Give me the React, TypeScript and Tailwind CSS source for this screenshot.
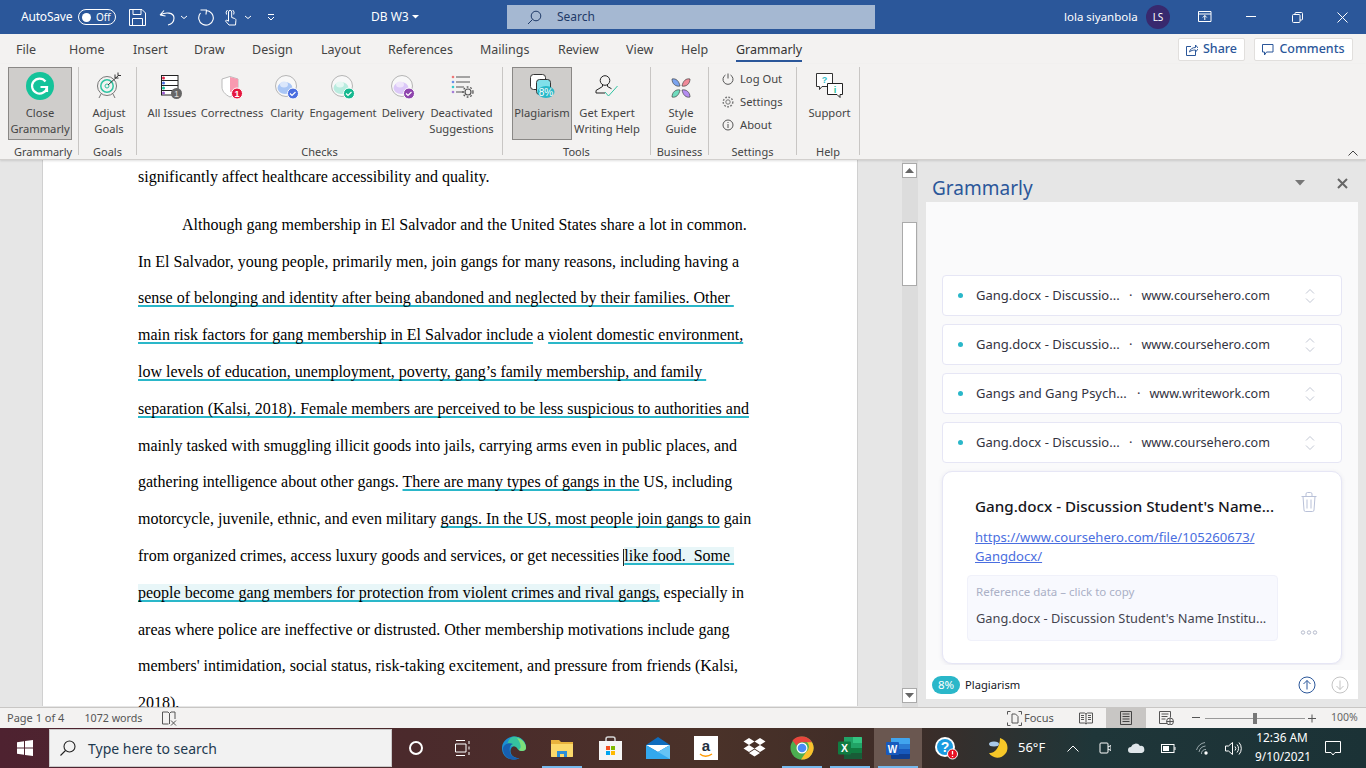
import React from "react";

const W = "#ffffff";

function Svg({ w, h, children, className = "" }: { w: number; h: number; children: React.ReactNode; className?: string }) {
  return (
    <svg width={w} height={h} viewBox={`0 0 ${w} ${h}`} fill="none" className={`block shrink-0 ${className}`}>
      {children}
    </svg>
  );
}

/* ---------- title bar ---------- */
function TitleBar() {
  return (
    <div className="h-[34px] shrink-0 bg-[#2b579a] flex items-center text-white relative">
      <span className="ml-[21px] w-[50px] text-[12px] tracking-[-0.2px] whitespace-nowrap">AutoSave</span>
      <div className="ml-[7px] w-[38px] h-[16px] rounded-full border border-white flex items-center">
        <div className="ml-[3px] w-[9px] h-[9px] rounded-full bg-white" />
        <span className="ml-[5px] text-[10px] leading-none">Off</span>
      </div>
      <Svg w={17} h={17} className="ml-[13px]">
        <path d="M.5.5h12.5l3.5 3.5v12.5H.5z M4 .5v5h8v-5 M3.5 16.5v-7h10v7" stroke={W} />
      </Svg>
      <Svg w={17} h={17} className="ml-[13px]">
        <path d="M1 6l4 -4.5 M1 6l5.5 1 M1.5 6C6 3 15 3 15 9c0 3-2 6-6 7" stroke={W} strokeWidth="1.1" />
      </Svg>
      <Svg w={8} h={5} className="ml-[4px]"><path d="M1 1l3 2.5L7 1" stroke={W} /></Svg>
      <Svg w={17} h={17} className="ml-[9px]">
        <path d="M9 1.5A7.3 7.3 0 1 1 3.5 4 M9.5 .5L9 5.5 M3.5 1h5.5" stroke={W} strokeWidth="1.1" />
      </Svg>
      <Svg w={13} h={17} className="ml-[10px]">
        <path d="M4.5 8V3a1.6 1.6 0 0 1 3.2 0v5.5l3 1c1 .4 1.3 1 1.2 2l-.4 4.5H5L1.5 12l1-1 2 1.2V8 M2.5 5.5a3.7 3.7 0 0 1 1-4.5 M9.7 5.5a3.7 3.7 0 0 0-1-4.5" stroke={W} strokeWidth="1" />
      </Svg>
      <Svg w={8} h={5} className="ml-[7px]"><path d="M1 1l3 2.5L7 1" stroke={W} /></Svg>
      <Svg w={8} h={7} className="ml-[15px]"><path d="M1 .5h6 M1 3l3 3 3-3" stroke={W} /></Svg>
      <span className="ml-[96px] w-[34px] text-[12px] whitespace-nowrap">DB W3</span>
      <Svg w={8} h={4} className="ml-[7px]"><path d="M0 0h7L3.500 3.500z" fill={W} /></Svg>
      <div className="ml-[87px] w-[368px] h-[24px] bg-[#a5b8d2] flex items-center text-[#1f3a68]">
        <Svg w={15} h={15} className="ml-[20px]">
          <circle cx="9" cy="6" r="4.8" stroke="#1f3a68" />
          <path d="M5.500 9.500L1 14" stroke="#1f3a68" />
        </Svg>
        <span className="ml-[15px] text-[12px]">Search</span>
      </div>
      <span className="ml-[189px] w-[71px] text-[11.500px] whitespace-nowrap">lola siyanbola</span>
      <div className="ml-[11px] w-[24px] h-[24px] rounded-full bg-[#38296e] flex items-center justify-center text-[10px]">LS</div>
      <Svg w={14} h={12} className="ml-[28px]">
        <path d="M.5.5h12.500v10H.5z M.5 3h12.500" stroke={W} />
        <path d="M6.800 9V4.500 M4.800 6.500l2-2 2 2" stroke={W} />
      </Svg>
      <Svg w={11} h={2} className="ml-[34px]"><path d="M0 .5h10" stroke={W} /></Svg>
      <Svg w={11} h={11} className="ml-[35px]">
        <rect x=".5" y="2.500" width="7.500" height="8" rx="1" stroke={W} />
        <path d="M3 2.500V1.500a1 1 0 0 1 1-1h5.500a1 1 0 0 1 1 1V7a1 1 0 0 1-1 1H8" stroke={W} />
      </Svg>
      <Svg w={11} h={11} className="ml-[34px]"><path d="M.5.500l10 10 M10.500.500l-10 10" stroke={W} /></Svg>
    </div>
  );
}

/* ---------- tabs ---------- */
const TABS: [string, number][] = [
  ["File", 53], ["Home", 64], ["Insert", 61], ["Draw", 58], ["Design", 69], ["Layout", 67],
  ["References", 92], ["Mailings", 78], ["Review", 68], ["View", 55], ["Help", 55],
];

function TabRow() {
  return (
    <div className="h-[30px] shrink-0 flex items-center text-[12.5px] text-[#444] pl-[16px] pt-[2px]">
      {TABS.map(([t, w]) => (
        <span key={t} style={{ width: w }}>{t}</span>
      ))}
      <span className="h-[28px] flex items-center relative font-normal text-[#333]">
        Grammarly
        <span className="absolute left-0 right-0 bottom-[2px] h-[2px] bg-[#2b579a]" />
      </span>
      <div className="ml-auto flex items-center gap-[9px] mr-[13px] mt-[-1px]">
        <div className="h-[23px] w-[67px] bg-white border border-[#e1dfdd] rounded-[2px] flex items-center justify-center gap-[5px] text-[#2b579a] text-[12.5px] font-medium">
          <Svg w={12} h={13}>
            <path d="M5 3.500H.5v9h9V9 M3.500 9c.5-3 3-4.500 6-4.500V2l3 3.500-3 3.500V7C7 7 5 7.500 3.500 9z" stroke="#2b579a" />
          </Svg>
          Share
        </div>
        <div className="h-[23px] w-[99px] bg-white border border-[#e1dfdd] rounded-[2px] flex items-center justify-center gap-[5px] text-[#2b579a] text-[12.5px] font-medium">
          <Svg w={12} h={12}><path d="M.5.500h10.500v7.500H4.500L2.500 11V8h-2z" stroke="#2b579a" /></Svg>
          Comments
        </div>
      </div>
    </div>
  );
}

/* ---------- ribbon icons ---------- */
const Badge = ({ cx, cy, fill }: { cx: number; cy: number; fill: string }) => (
  <g>
    <circle cx={cx} cy={cy} r="5.500" fill={fill} stroke="#fff" />
    <path d={`M${cx - 3} ${cy}l2 2 3.500-3.500`} stroke="#fff" strokeWidth="1.200" />
  </g>
);

const IconGrammarly = () => (
  <Svg w={28} h={28}>
    <circle cx="14" cy="14" r="14" fill="#15c39a" />
    <path d="M19.500 9.500A7.500 7.500 0 1 0 21 15h-6.500 M21 15v5 M21 15l-3 0" stroke="#fff" strokeWidth="2.200" fill="none" />
  </Svg>
);
const IconGoals = () => (
  <Svg w={26} h={28}>
    <circle cx="11" cy="14" r="9.500" stroke="#777" />
    <circle cx="11" cy="14" r="6.200" stroke="#2fc4a2" strokeWidth="1.500" />
    <circle cx="11" cy="14" r="2" stroke="#2fc4a2" />
    <path d="M12 13L23 3 M19 2.500v3.500h3.500 M22 .5v3h3" stroke="#333" />
    <path d="M5 22l-2 4 M17 22l2 4" stroke="#777" />
  </Svg>
);
const IconAll = () => (
  <Svg w={22} h={25}>
    <rect x=".5" y=".5" width="16.500" height="19.500" fill="#fff" stroke="#222" />
    <path d="M1 5.500h16 M1 10.500h16 M1 15.500h16" stroke="#222" strokeWidth="1.200" />
    <circle cx="2.500" cy="3" r="1.500" fill="#e5284a" />
    <circle cx="2.500" cy="8" r="1.500" fill="#4a6ee0" />
    <circle cx="2.500" cy="13" r="1.500" fill="#15c39a" />
    <circle cx="2.500" cy="18" r="1.500" fill="#9b59d0" />
    <circle cx="15.500" cy="18.500" r="5.500" fill="#666" />
    <text x="15.500" y="22" textAnchor="middle" fontSize="9" fill="#ddd" fontFamily="Liberation Sans">1</text>
  </Svg>
);
const IconCorrect = () => (
  <Svg w={24} h={25}>
    <path d="M10 1.500L2 4v8c0 4 3 7.500 8 10 5-2.500 8-6 8-10V4z" fill="#fff" stroke="#bbb" />
    <path d="M10 2l8 2v8c0 2-.5 3-1 4l-7 1z" fill="#f89ab0" />
    <circle cx="17" cy="18.500" r="5.500" fill="#e5173f" stroke="#fff" />
    <text x="17" y="22" textAnchor="middle" fontSize="9" fontWeight="bold" fill="#fff" fontFamily="Liberation Sans">1</text>
  </Svg>
);
const Orb = ({ a, b, badge }: { a: string; b: string; badge: string }) => (
  <Svg w={24} h={25}>
    <circle cx="11" cy="11" r="10.500" fill="#f8f8f8" stroke="#b5b5b5" />
    <ellipse cx="10" cy="13" rx="7.500" ry="6" fill={a} />
    <ellipse cx="9" cy="9.500" rx="4" ry="3" fill={b} />
    <Badge cx={18} cy={18.500} fill={badge} />
  </Svg>
);
const IconDeact = () => (
  <Svg w={24} h={25}>
    <path d="M6 2h14 M6 7h14 M6 12h8 M6 17h8" stroke="#555" />
    <circle cx="3" cy="2" r="1.300" fill="#e77" />
    <circle cx="3" cy="7" r="1.300" fill="#6a8fe8" />
    <circle cx="3" cy="12" r="1.300" fill="#3cc" />
    <circle cx="3" cy="17" r="1.300" fill="#a57fd8" />
    <circle cx="18" cy="17" r="3" stroke="#555" strokeWidth="1.200" />
    <circle cx="18" cy="17" r="5" stroke="#555" strokeWidth="1.300" strokeDasharray="1.800 1.800" />
  </Svg>
);
const IconPlag = () => (
  <Svg w={25} h={25}>
    <rect x=".5" y=".5" width="15" height="15" rx="3" fill="#fff" stroke="#333" />
    <rect x="6.500" y="5.500" width="14" height="15" rx="3" fill="#7fe0ea" stroke="#333" />
    <ellipse cx="16" cy="18" rx="8.500" ry="6" fill="#28b8c8" />
    <text x="16" y="21.500" textAnchor="middle" fontSize="10" fill="#fff" fontFamily="Liberation Sans">8%</text>
  </Svg>
);
const IconExpert = () => (
  <Svg w={25} h={25}>
    <circle cx="10" cy="6.500" r="4.800" stroke="#222" />
    <path d="M7.500 11v1.500L1 16.500V19h9 M12.500 11v1.500l4 2.200" stroke="#222" />
    <path d="M10 18l3.500 4 9-10" stroke="#2dc3a1" />
  </Svg>
);
const IconStyle = () => (
  <Svg w={22} h={22}>
    <path d="M2 2c4-1 7 2 8 7C6 10 2 7 2 2z" fill="#7ba3ee" stroke="#444" strokeWidth=".700" />
    <path d="M20 2c-4-1-7 2-8 7 4 1 8-2 8-7z" fill="#f08a98" stroke="#444" strokeWidth=".700" />
    <path d="M2 20c4 1 7-2 8-7-4-1-8 2-8 7z" fill="#6fdcbe" stroke="#444" strokeWidth=".700" />
    <path d="M20 20c-4 1-7-2-8-7 4-1 8 2 8 7z" fill="#b48cf0" stroke="#444" strokeWidth=".700" />
  </Svg>
);
const IconSupport = () => (
  <Svg w={27} h={26}>
    <path d="M.5.500h16v13H6l-2.500 3v-3h-3z" fill="#fff" stroke="#333" />
    <text x="8.500" y="10" textAnchor="middle" fontSize="9" fontWeight="bold" fill="#2bbcc8" fontFamily="Liberation Sans">?</text>
    <path d="M11.500 10.500h15v11h-2.500v3l-3-3h-9.500z" fill="#fff" stroke="#222" />
    <text x="19" y="20" textAnchor="middle" fontSize="9" fontWeight="bold" fill="#15c39a" fontFamily="Liberation Sans">i</text>
  </Svg>
);

function RibbonBtn({ w, icon, label, active, pt = 3 }: { w: number; icon: React.ReactNode; label: string[]; active?: boolean; pt?: number }) {
  return (
    <div
      style={{ width: w }}
      className={`h-[73px] shrink-0 flex flex-col items-center text-[11.200px] leading-[16px] text-[#444] whitespace-nowrap ${active ? "bg-[#cfcdcb] border border-[#8a8886]" : "border border-transparent"}`}
    >
      <div className="h-[36px] flex items-center justify-center" style={{ paddingTop: pt }}>{icon}</div>
      <div className="mt-[1px]">{label[0]}</div>
      {label[1] && <div>{label[1]}</div>}
    </div>
  );
}

function Group({ w, label, children }: { w: number; label: string; children: React.ReactNode }) {
  return (
    <div style={{ width: w }} className="shrink-0 flex flex-col border-r border-[#c8c6c4] h-[88px]">
      <div className="h-[73px] shrink-0 flex">{children}</div>
      <div className="h-[15px] shrink-0 mt-[4px] flex items-center justify-center text-[11px] leading-none text-[#444] whitespace-nowrap">{label}</div>
    </div>
  );
}

function Ribbon() {
  return (
    <div className="h-[96px] shrink-0 flex pl-[8px] pt-[3px] border-b border-[#d2d0ce] shadow-[0_1px_2px_rgba(0,0,0,0.12)] relative z-10">
      <Group w={71} label="Grammarly"><RibbonBtn w={64} active pt={0} icon={<IconGrammarly />} label={["Close", "Grammarly"]} /></Group>
      <Group w={58} label="Goals"><div className="w-[58px] pl-[3px] flex justify-center"><RibbonBtn w={50} pt={0} icon={<IconGoals />} label={["Adjust", "Goals"]} /></div></Group>
      <Group w={366} label="Checks">
        <div className="flex pl-[8px]">
          <RibbonBtn w={54} icon={<IconAll />} label={["All Issues"]} />
          <RibbonBtn w={66} icon={<IconCorrect />} label={["Correctness"]} />
          <RibbonBtn w={44} icon={<Orb a="#a9c6f5" b="#dbe7fb" badge="#4a6ee0" />} label={["Clarity"]} />
          <RibbonBtn w={68} icon={<Orb a="#b9ecdf" b="#e5f8f3" badge="#15b88f" />} label={["Engagement"]} />
          <RibbonBtn w={52} icon={<Orb a="#dcc8f8" b="#efe5fb" badge="#8e44ad" />} label={["Delivery"]} />
          <RibbonBtn w={65} icon={<IconDeact />} label={["Deactivated", "Suggestions"]} />
        </div>
      </Group>
      <Group w={148} label="Tools">
        <div className="flex pl-[9px]">
          <RibbonBtn w={60} active pt={1} icon={<IconPlag />} label={["Plagiarism"]} />
          <RibbonBtn w={70} pt={1} icon={<IconExpert />} label={["Get Expert", "Writing Help"]} />
        </div>
      </Group>
      <Group w={58} label="Business"><div className="w-[58px] pl-[3px] flex justify-center"><RibbonBtn w={50} icon={<IconStyle />} label={["Style", "Guide"]} /></div></Group>
      <Group w={88} label="Settings">
        <div className="pl-[13px] pt-[2.500px] flex flex-col gap-[5px] text-[11.200px] leading-[18px] text-[#444]">
          <div className="flex items-center gap-[6px]">
            <Svg w={12} h={12}><path d="M3.500 2a5 5 0 1 0 5 0 M6 .5v5" stroke="#555" /></Svg>Log Out
          </div>
          <div className="flex items-center gap-[6px]">
            <Svg w={12} h={12}><circle cx="6" cy="6" r="2.200" stroke="#777" /><circle cx="6" cy="6" r="4.800" stroke="#777" strokeWidth="1.400" strokeDasharray="1.800 1.400" /></Svg>Settings
          </div>
          <div className="flex items-center gap-[6px]">
            <Svg w={12} h={12}><circle cx="6" cy="6" r="5" stroke="#555" /><path d="M6 5v4 M6 3v1" stroke="#555" /></Svg>About
          </div>
        </div>
      </Group>
      <Group w={63} label="Help"><div className="w-[63px] pl-[3px] flex justify-center"><RibbonBtn w={56} pt={0} icon={<IconSupport />} label={["Support"]} /></div></Group>
      <div className="ml-auto self-end mb-[3px] mr-[8px]">
        <Svg w={10} h={6}><path d="M.5 5.500L5 1l4.500 4.500" stroke="#444" /></Svg>
      </div>
    </div>
  );
}

/* ---------- document ---------- */
const U = ({ children }: { children: React.ReactNode }) => (
  <span className="underline decoration-2 decoration-[#2ab7c9] underline-offset-[2px] [text-decoration-skip-ink:none]">{children}</span>
);
const H = ({ children }: { children: React.ReactNode }) => (
  <span className="bg-[#e8f6f8] underline decoration-2 decoration-[#2ab7c9] underline-offset-[2px] [text-decoration-skip-ink:none]">{children}</span>
);

function Line({ children, indent, className = "" }: { children: React.ReactNode; indent?: boolean; className?: string }) {
  return <div className={`h-[36.8px] leading-[36.8px] whitespace-pre ${indent ? "pl-[44px]" : ""} ${className}`}>{children}</div>;
}

function Doc() {
  return (
    <div className="w-[902px] shrink-0 bg-[#e6e6e6] overflow-hidden">
      <div className="ml-[42px] w-[816px] h-full bg-white border-x border-[#d0d0d0] pl-[95px] font-['Liberation_Serif',serif] text-[16px] text-black">
        <Line className="mt-[-1px] mb-[11px]">significantly affect healthcare accessibility and quality.</Line>
        <Line indent>Although gang membership in El Salvador and the United States share a lot in common.</Line>
        <Line>In El Salvador, young people, primarily men, join gangs for many reasons, including having a</Line>
        <Line><U>sense of belonging and identity after being abandoned and neglected by their families. Other </U></Line>
        <Line><U>main risk factors for gang membership in El Salvador include</U> a <U>violent domestic environment,</U></Line>
        <Line><U>low levels of education, unemployment, poverty, gang’s family membership, and family </U></Line>
        <Line><U>separation (Kalsi, 2018). Female members are perceived to be less suspicious to authorities and</U></Line>
        <Line>mainly tasked with smuggling illicit goods into jails, carrying arms even in public places, and</Line>
        <Line>gathering intelligence about other gangs. <U>There are many types of gangs in the</U> US, including</Line>
        <Line>motorcycle, juvenile, ethnic, and even military <U>gangs. In the US, most people join gangs to</U> gain</Line>
        <Line>from organized crimes, access luxury goods and services, or get necessities <span className="inline-block w-[1px] h-[17px] bg-[#222] align-middle" /><H>like food.  Some </H></Line>
        <Line><H>people become gang members for protection from violent crimes and rival gangs,</H> especially in</Line>
        <Line>areas where police are ineffective or distrusted. Other membership motivations include gang</Line>
        <Line>members' intimidation, social status, risk-taking excitement, and pressure from friends (Kalsi,</Line>
        <Line>2018).</Line>
      </div>
    </div>
  );
}

function ScrollBar() {
  return (
    <div className="w-[16px] shrink-0 bg-[#dcdcdc] flex flex-col items-start pt-[3px] pb-[4px]">
      <div className="w-[15px] h-[15px] bg-white border border-[#aaa] flex items-center justify-center">
        <Svg w={9} h={5}><path d="M0 5L4.500 0 9 5z" fill="#666" /></Svg>
      </div>
      <div className="w-[15px] h-[64px] bg-white border border-[#aaa] mt-[44px]" />
      <div className="w-[15px] h-[15px] bg-white border border-[#aaa] mt-auto flex items-center justify-center">
        <Svg w={9} h={5}><path d="M0 0L4.500 5 9 0z" fill="#666" /></Svg>
      </div>
    </div>
  );
}

function SourceRow({ title, url }: { title: string; url: string }) {
  return (
    <div className="h-[41px] w-[400px] shrink-0 bg-white border border-[#e6e6f5] rounded-[4px] flex items-center text-[13px] text-[#33333f]">
      <div className="ml-[15px] w-[5px] h-[5px] rounded-full bg-[#2ab7c9]" />
      <span className="ml-[13px]">{title}</span>
      <span className="ml-auto mr-[9px]">·</span>
      <span className="text-[12.600px] mt-[1px]">{url}</span>
      <Svg w={10} h={16} className="ml-[35px] mr-[26px]">
        <path d="M1 5.500L5 1.500l4 4 M1 10.500l4 4 4-4" stroke="#c3c8d4" />
      </Svg>
    </div>
  );
}

function Pane() {
  return (
    <div className="flex-1 bg-[#e6e6e6] pl-[8px] pr-[8px] flex flex-col relative">
      <div className="h-[42px] shrink-0 flex items-center">
        <span className="ml-[6px] text-[19px] text-[#2b579a] leading-none mt-[14px]">Grammarly</span>
        <Svg w={10} h={6} className="ml-auto mr-[32px] mt-[4px]"><path d="M0 0h10L5 5.500z" fill="#777" /></Svg>
        <Svg w={11} h={11} className="mr-[10px] mt-[4px]"><path d="M1 1l9 9 M10 1l-9 9" stroke="#666" strokeWidth="2" /></Svg>
      </div>
      <div className="h-[497px] shrink-0 bg-[#fafafb] flex flex-col">
        <div className="flex-1 pl-[16px] pt-[73px] flex flex-col gap-[8px] overflow-hidden">
          <SourceRow title="Gang.docx - Discussio..." url="www.coursehero.com" />
          <SourceRow title="Gang.docx - Discussio..." url="www.coursehero.com" />
          <SourceRow title="Gangs and Gang Psych..." url="www.writework.com" />
          <SourceRow title="Gang.docx - Discussio..." url="www.coursehero.com" />
          <div className="h-[193px] w-[400px] shrink-0 bg-white border border-[#e6e6f5] rounded-[10px] shadow-[0_1px_4px_rgba(80,80,140,0.12)] flex pl-[24px] pt-[20px]">
            <div className="w-[311px] shrink-0">
              <div className="pl-[8px] text-[15.200px] leading-[28px] font-medium text-[#15151c] whitespace-nowrap">Gang.docx - Discussion Student's Name...</div>
              <div className="pl-[8px] mt-[8px] text-[13.100px] leading-[19px] text-[#4a6ee0] underline whitespace-nowrap">
                https://www.coursehero.com/file/105260673/<br />Gangdocx/
              </div>
              <div className="mt-[9px] h-[66px] bg-[#f8f9fe] border border-[#f0f1fa] rounded-[4px] pl-[8px] pt-[6px]">
                <div className="text-[11.500px] leading-[20px] text-[#aab0c6]">Reference data – click to copy</div>
                <div className="mt-[6px] text-[12.800px] leading-[20px] text-[#44444f] whitespace-nowrap">Gang.docx - Discussion Student's Name Institu...</div>
              </div>
            </div>
            <div className="ml-[22px] w-[18px] flex flex-col items-center">
              <Svg w={16} h={20}>
                <path d="M.5 4.500h15 M5 4.500V2a1.500 1.500 0 0 1 1.500-1.500h3A1.500 1.500 0 0 1 11 2v2.500 M2 4.500l1 13.500a1.500 1.500 0 0 0 1.500 1.500h7A1.500 1.500 0 0 0 13 18l1-13.500 M6 7.500v9 M10 7.500v9" stroke="#b9c1d8" />
              </Svg>
              <Svg w={18} h={5} className="mt-[118px]">
                <circle cx="3" cy="2.500" r="1.700" stroke="#b5bbcc" /><circle cx="9" cy="2.500" r="1.700" stroke="#b5bbcc" /><circle cx="15" cy="2.500" r="1.700" stroke="#b5bbcc" />
              </Svg>
            </div>
          </div>
        </div>
        <div className="h-[29px] shrink-0 bg-white mt-[5px] flex items-center pl-[6px]">
          <div className="w-[28px] h-[18px] rounded-full bg-[#2ab7c9] text-white text-[11.500px] flex items-center justify-center">8%</div>
          <span className="ml-[5px] text-[11.200px] text-[#16161e] mt-[1px]">Plagiarism</span>
          <Svg w={18} h={18} className="ml-auto">
            <circle cx="9" cy="9" r="8" stroke="#2b579a" /><path d="M9 13.500V4.500 M5.500 8L9 4.500 12.500 8" stroke="#2b579a" />
          </Svg>
          <Svg w={18} h={18} className="ml-[15px] mr-[9px]">
            <circle cx="9" cy="9" r="8" stroke="#c4c4c4" /><path d="M9 4.500v9 M5.500 10L9 13.500 12.500 10" stroke="#c4c4c4" />
          </Svg>
        </div>
      </div>
    </div>
  );
}

/* ---------- status bar ---------- */
function StatusBar() {
  return (
    <div className="h-[21px] shrink-0 bg-[#f3f2f1] border-t border-[#c8c6c4] flex items-center text-[11px] text-[#555] relative z-10">
      <span className="ml-[7px]">Page 1 of 4</span>
      <span className="ml-[20px] text-[10.700px]">1072 words</span>
      <Svg w={15} h={15} className="ml-[20px]">
        <path d="M.5 1h5.500l1.500 1.500L9 1h4v7 M7.500 2.500V13 M.5 1v12h6" stroke="#555" />
        <path d="M9 9.500l5 5 M14 9.500l-5 5" stroke="#555" />
      </Svg>
      <div className="ml-auto flex items-center">
        <Svg w={15} h={15}>
          <path d="M.5 3.500v-3h3 M11.500.5h3v3 M14.500 11.500v3h-3 M3.500 14.500h-3v-3" stroke="#555" />
          <path d="M5 3h3.500L11 5.500V12H5z" stroke="#555" />
        </Svg>
        <span className="ml-[2px] w-[30px] text-[#555] whitespace-nowrap">Focus</span>
        <Svg w={14} h={13} className="ml-[25px]">
          <path d="M.5 1h5l1.500 1 1.500-1h5v10h-5L7 12l-1.500-1h-5z M7 2v10 M2 3.500h3 M2 5.500h3 M2 7.500h3 M9 3.500h3 M9 5.500h3 M9 7.500h3" stroke="#555" />
        </Svg>
        <div className="ml-[13px] w-[40px] h-[20px] bg-[#c8c6c4] flex items-center justify-center">
          <Svg w={12} h={14}>
            <path d="M.5.5h11v13H.5z M2.500 3h7 M2.500 5.500h7 M2.500 8h7 M2.500 10.500h7" stroke="#444" />
          </Svg>
        </div>
        <Svg w={15} h={14} className="ml-[13px]">
          <path d="M8 12.500H.5V.5h11v6 M2.500 3h7 M2.500 5.500h6 M2.500 8h4" stroke="#555" />
          <circle cx="11" cy="10.500" r="3.500" stroke="#555" /><path d="M7.500 10.500h7 M11 7v7" stroke="#555" />
        </Svg>
        <Svg w={8} h={2} className="ml-[18px]"><path d="M0 .5h8" stroke="#555" /></Svg>
        <div className="ml-[5px] w-[100px] h-[1px] bg-[#999] relative">
          <div className="absolute left-[48px] top-[-5px] w-[4px] h-[11px] bg-[#777]" />
        </div>
        <Svg w={9} h={9} className="ml-[3px]"><path d="M0 4.500h8 M4 .5v8" stroke="#555" /></Svg>
        <span className="ml-[14px] w-[27px] mr-[8px] text-[10.500px] text-[#666] whitespace-nowrap">100%</span>
      </div>
    </div>
  );
}

/* ---------- task bar ---------- */
const TBtn = ({ w = 48, children, on, active, className = "" }: { w?: number; children: React.ReactNode; on?: boolean; active?: boolean; className?: string }) => (
  <div
    style={{ width: w }}
    className={`h-[40px] shrink-0 flex items-center justify-center relative ${active ? "bg-[#6a5750]" : ""} ${className}`}
  >
    {children}
    {on && <span className="absolute bottom-0 left-[4px] right-[4px] h-[2px] bg-[#76b9ed]" />}
  </div>
);

function TaskBar() {
  return (
    <div className="h-[40px] shrink-0 flex items-center text-white bg-[linear-gradient(90deg,#4e2230,#4b2a2c_30%,#4a3229_52%,#3e2c27_66%,#1f3639_80%,#1b3236)]">
      <div className="w-[49px] flex justify-center">
        <Svg w={16} h={16}><path d="M0 2.300L7 1.300V7.500H0z M8 1.100L16 0V7.500H8z M0 8.500H7V14.700L0 13.700z M8 8.500H16V16L8 14.900z" fill="#fff" /></Svg>
      </div>
      <div className="w-[343px] h-[38px] bg-[#f2f2f2] border border-[#c9c9c9] flex items-center text-[#1f3a50]">
        <Svg w={16} h={16} className="ml-[10px]">
          <circle cx="9.500" cy="6.500" r="5.500" stroke="#222" strokeWidth="1.100" /><path d="M5.500 10.500L.5 15.500" stroke="#222" strokeWidth="1.100" />
        </Svg>
        <span className="ml-[12px] text-[14px]">Type here to search</span>
      </div>
      <TBtn w={48}><div className="w-[14px] h-[14px] rounded-full border-2 border-white" /></TBtn>
      <TBtn w={46}>
        <Svg w={16} h={16}><path d="M1 .5h9 M1 15.500h9 M.5 4h10.500v8H.5z M14 1v3 M14 6.500v3 M14 12v3" stroke="#fff" /></Svg>
      </TBtn>
      <TBtn w={52} className="pl-[4px]">
        <Svg w={24} h={24}>
          <path d="M12 .5C5 .5 0 6 0 12c0 7 5 11.500 11 11.500 2.500 0 4.500-.5 6.500-1.500-4 .5-9-2-9-7 0-3 2-5 5-5.500 3 0 6 1.500 10.500 2.500C24 5 19 .5 12 .5z" fill="#1b8ed2" />
          <path d="M12 .5C18 .5 24 5 24 12c0 2-2 3-4 3-4 0-4-2-5.500-3.500C13 10 8 9.500 5 12 5 6 8 .5 12 .5z" fill="#35c1a0" />
          <path d="M15 2c5 1 9 5 9 10 0 2-2 3-4 3-2 0-3-1-3-2 3 0 2-6-2-11z" fill="#7de07a" />
          <path d="M1 13c0-4 5-7 10-5-3 1-4 4-3 8 1 4 4 6 9 6-6 4-16 0-16-9z" fill="#175fb0" />
        </Svg>
      </TBtn>
      <TBtn w={48} on>
        <Svg w={22} h={20}>
          <path d="M0 2h8l2 2h12v14a1 1 0 0 1-1 1H1a1 1 0 0 1-1-1z" fill="#e8b33d" />
          <path d="M0 6h22v12a1 1 0 0 1-1 1H1a1 1 0 0 1-1-1z" fill="#fbd96b" />
          <path d="M6 19v-6h10v6h-3v-3h-4v3z" fill="#2c8fd8" />
        </Svg>
      </TBtn>
      <TBtn w={48}>
        <Svg w={23} h={24}>
          <path d="M7 6V3a2 2 0 0 1 2-2h5a2 2 0 0 1 2 2v3" stroke="#d5d5d5" strokeWidth="1.500" />
          <rect y="5" width="23" height="19" fill="#f5f5f5" />
          <rect x="7" y="10" width="4" height="4" fill="#f25022" />
          <rect x="12" y="10" width="4" height="4" fill="#7fba00" />
          <rect x="7" y="15" width="4" height="4" fill="#00a4ef" />
          <rect x="12" y="15" width="4" height="4" fill="#ffb900" />
        </Svg>
      </TBtn>
      <TBtn w={48}>
        <Svg w={24} h={22}>
          <path d="M0 8L12 0l12 8v14H0z" fill="#0f6cbd" />
          <path d="M0 8h24L12 15z" fill="#fff" />
          <path d="M0 8l12 7 12-7v14H0z" fill="#33a8ee" />
          <path d="M12 15l12-7v14z" fill="#66c3f5" />
        </Svg>
      </TBtn>
      <TBtn w={48}>
        <div className="w-[24px] h-[24px] bg-white flex flex-col items-center justify-center">
          <span className="font-['Liberation_Sans',sans-serif] font-bold text-[15px] leading-[14px] text-[#232f3e]">a</span>
          <Svg w={14} h={5}><path d="M1 1c3 3 8 3 12 0" stroke="#f90" strokeWidth="1.300" /></Svg>
        </div>
      </TBtn>
      <TBtn w={48}>
        <Svg w={23} h={21}>
          <path d="M6 0l5.500 3.500L6 7 .5 3.500z M17 0l5.500 3.500L17 7l-5.500-3.500z M6 7l5.500 3.500L6 14 .5 10.500z M17 7l5.500 3.500L17 14l-5.500-3.500z M11.500 11.500L17 15l-5.500 3.500L6 15z" fill="#fff" />
        </Svg>
      </TBtn>
      <TBtn w={48} on>
        <Svg w={24} h={24}>
          <circle cx="12" cy="12" r="11.500" fill="#4caf50" />
          <path d="M12 .5a11.500 11.500 0 0 1 10 5.800H12a6 6 0 0 0-5.500 3.500L2.500 4.500A11.500 11.500 0 0 1 12 .5z" fill="#e8453c" />
          <path d="M22 6.300A11.500 11.500 0 0 1 11 23.500l5.500-8A6 6 0 0 0 17 6.300z" fill="#fbc02d" />
          <circle cx="12" cy="12" r="5.500" fill="#fff" /><circle cx="12" cy="12" r="4.300" fill="#4a8bf5" />
        </Svg>
      </TBtn>
      <TBtn w={48} on>
        <Svg w={24} h={22}>
          <path d="M6 0h17a1 1 0 0 1 1 1v20a1 1 0 0 1-1 1H6z" fill="#21a366" />
          <path d="M15 0h8a1 1 0 0 1 1 1v5h-9z" fill="#33c481" />
          <path d="M6 11h18v5H6z" fill="#107c41" />
          <path d="M6 16h18v5a1 1 0 0 1-1 1H6z" fill="#185c37" />
          <rect y="4.500" width="13" height="13" rx="1" fill="#107c41" />
          <text x="6.500" y="15" textAnchor="middle" fontSize="10.500" fontWeight="bold" fill="#fff" fontFamily="Liberation Sans">X</text>
        </Svg>
      </TBtn>
      <TBtn w={48} on active>
        <Svg w={24} h={21}>
          <path d="M5 0h18a1 1 0 0 1 1 1v5H5z" fill="#41a5ee" />
          <path d="M5 6h19v5H5z" fill="#2b7cd3" />
          <path d="M5 11h19v5H5z" fill="#185abd" />
          <path d="M5 16h19v4a1 1 0 0 1-1 1H6a1 1 0 0 1-1-1z" fill="#103f91" />
          <rect y="4" width="13" height="13" rx="1" fill="#185abd" />
          <text x="6.500" y="14.500" textAnchor="middle" fontSize="10" fontWeight="bold" fill="#fff" fontFamily="Liberation Sans">W</text>
        </Svg>
      </TBtn>
      <TBtn w={48}>
        <Svg w={24} h={24}>
          <circle cx="11" cy="11" r="10" fill="#fff" />
          <circle cx="11" cy="11" r="8" fill="#1b9be0" />
          <text x="11" y="16" textAnchor="middle" fontSize="14" fontWeight="bold" fill="#fff" fontFamily="Liberation Sans">?</text>
          <circle cx="18.500" cy="18" r="5" fill="#e81123" stroke="#fff" />
          <path d="M18.500 15v3.500 M18.500 20v1" stroke="#fff" strokeWidth="1.300" />
        </Svg>
      </TBtn>
      <Svg w={20} h={20} className="ml-[18px]">
        <path d="M12 0a10 10 0 1 1-11 15C6 16 12 10 12 0z" fill="#f6c728" />
        <ellipse cx="6" cy="6" rx="5" ry="2.500" fill="#a8c8e8" />
      </Svg>
      <span className="ml-[10px] w-[28px] text-[13px] whitespace-nowrap">56°F</span>
      <Svg w={12} h={7} className="ml-[21px]"><path d="M.5 6.500L6 1l5.500 5.500" stroke="#fff" /></Svg>
      <Svg w={12} h={15} className="ml-[20px]">
        <path d="M2 2h6a1 1 0 0 1 1 1v8a1 1 0 0 1-1 1H2a1 1 0 0 1-1-1V3a1 1 0 0 1 1-1z M9 6l3-1.500v5L9 8" stroke="#fff" />
      </Svg>
      <Svg w={17} h={10} className="ml-[17px]">
        <path d="M3 10a3 3 0 0 1 0-6 5 5 0 0 1 9-1 3.500 3.500 0 0 1 1.500 7z" fill="#dfe6ea" />
      </Svg>
      <Svg w={15} h={9} className="ml-[16px]">
        <rect x=".5" y=".5" width="12.500" height="8" stroke="#fff" /><rect x="2" y="2" width="6" height="5" fill="#fff" /><path d="M14 3v3" stroke="#fff" />
      </Svg>
      <Svg w={15} h={13} className="ml-[20px]">
        <path d="M.5 8A11 11 0 0 1 9 .5 M3 10A7.500 7.500 0 0 1 9.500 4 M5.500 12A4 4 0 0 1 10 7.500" stroke="#9aa8ac" />
        <circle cx="10" cy="11" r="1.700" fill="#fff" />
      </Svg>
      <Svg w={17} h={13} className="ml-[14px]">
        <path d="M.5 4h3L7.500.5v12L3.500 9h-3z M10 4.500a3 3 0 0 1 0 4 M12 2.500a6 6 0 0 1 0 8 M14 .5a9 9 0 0 1 0 12" stroke="#fff" />
      </Svg>
      <div className="ml-[13px] w-[54px] mt-[-2px] text-center text-[11.800px] leading-[19px] whitespace-nowrap">
        <div>12:36 AM</div>
        <div>9/10/2021</div>
      </div>
      <Svg w={16} h={15} className="ml-[16px]"><path d="M.5.500h15v11H10l-2 2.500-2-2.500H.5z" stroke="#fff" /></Svg>
    </div>
  );
}

export default function App() {
  return (
    <div className="w-[1366px] h-[768px] overflow-hidden flex flex-col bg-[#f3f2f1] font-['Noto_Sans',sans-serif]">
      <TitleBar />
      <TabRow />
      <Ribbon />
      <div className="h-[547px] shrink-0 flex overflow-hidden">
        <Doc />
        <ScrollBar />
        <Pane />
      </div>
      <StatusBar />
      <TaskBar />
    </div>
  );
}
